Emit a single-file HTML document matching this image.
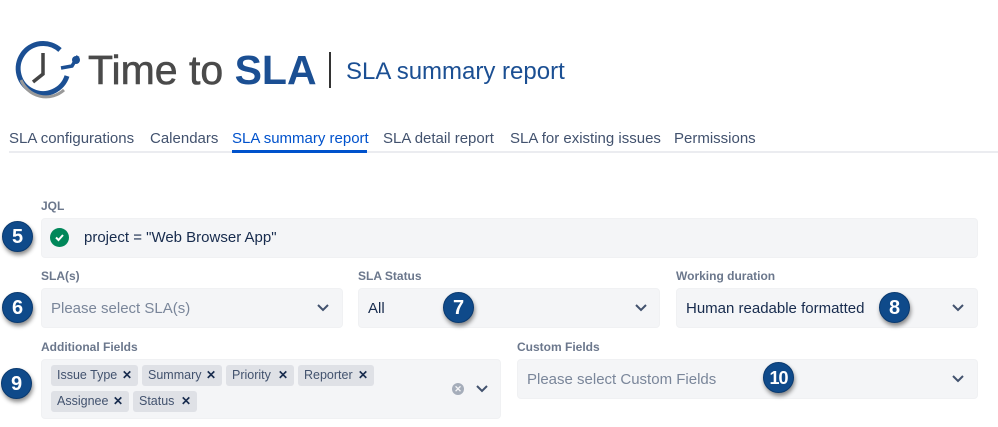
<!DOCTYPE html>
<html><head><meta charset="utf-8"><style>
*{margin:0;padding:0;box-sizing:border-box}
body{width:998px;height:427px;background:#fff;position:relative;overflow:hidden;font-family:"Liberation Sans",Arial,sans-serif;color:#172b4d}
.a{position:absolute;white-space:nowrap}
.tab{position:absolute;top:130px;font-size:15px;color:#42526e}
.lbl{position:absolute;font-size:12px;font-weight:bold;color:#6b778c}
.box{position:absolute;background:#f4f5f7;border-radius:4px;border:1px solid #f0f1f3}
.ph{position:absolute;font-size:15px}
.chev{position:absolute;width:16px;height:10px}
.badge{position:absolute;width:31px;height:31px;border-radius:50%;background:#0f4a8a;color:#fff;font-weight:bold;font-size:20px;text-align:center;line-height:31px;box-shadow:1px 3px 4px rgba(0,0,0,.45);border:1px solid #0a3a70}
.tag{position:absolute;height:21px;background:#dfe1e6;border-radius:3px;font-size:12.5px;color:#42526e;line-height:21px;padding-left:6px}
.tag b{position:absolute;right:6px;top:0;font-size:12px;color:#172b4d}
</style></head><body>
<svg class="a" style="left:14px;top:40px" width="70" height="60" viewBox="0 0 70 60">
<path d="M46 10 A25 25 0 1 0 53 36" fill="none" stroke="#1b4f93" stroke-width="5"/>
<path d="M7 40 A27 27 0 0 0 50 50" fill="none" stroke="#999" stroke-width="3"/>
<path d="M29 13 V34 L19 42" fill="none" stroke="#444" stroke-width="3.5"/>
<circle cx="62" cy="20" r="4" fill="#1b4f93"/>
<path d="M47 28 L58 26 L64 16" fill="none" stroke="#1b4f93" stroke-width="3.5"/>
</svg>
<div class="a" style="left:88px;top:47px;font-size:41px;color:#4a4a4a;-webkit-text-stroke:0.6px #4a4a4a">Time to <span style="color:#1b4f93;font-weight:bold;-webkit-text-stroke:0">SLA</span></div>
<div class="a" style="left:329px;top:52px;width:2px;height:36px;background:#333"></div>
<div class="a" style="left:346px;top:58px;font-size:24px;color:#1b4f93">SLA summary report</div>
<div class="tab" style="left:9px">SLA configurations</div>
<div class="tab" style="left:150px">Calendars</div>
<div class="tab" style="left:232px;color:#0052cc">SLA summary report</div>
<div class="tab" style="left:383px">SLA detail report</div>
<div class="tab" style="left:510px">SLA for existing issues</div>
<div class="tab" style="left:674px">Permissions</div>
<div class="a" style="left:9px;top:151px;width:989px;height:2px;background:#ebecf0"></div>
<div class="a" style="left:232px;top:150px;width:135px;height:3px;background:#0052cc"></div>

<div class="lbl" style="left:41px;top:199px">JQL</div>
<div class="box" style="left:41px;top:218px;width:937px;height:40px"></div>
<div class="a" style="left:50px;top:228px;width:19px;height:19px;border-radius:50%;background:#00875a"></div>
<svg class="a" style="left:54px;top:233px" width="11" height="9"><path d="M2 4.5 L4.5 7 L9 2" fill="none" stroke="#fff" stroke-width="2"/></svg>
<div class="ph" style="left:84px;top:229px">project = "Web Browser App"</div>

<div class="lbl" style="left:41px;top:269px">SLA(s)</div>
<div class="lbl" style="left:358px;top:269px">SLA Status</div>
<div class="lbl" style="left:676px;top:269px">Working duration</div>
<div class="box" style="left:41px;top:288px;width:302px;height:40px"></div>
<div class="box" style="left:358px;top:288px;width:302px;height:40px"></div>
<div class="box" style="left:676px;top:288px;width:302px;height:40px"></div>
<div class="ph" style="left:51px;top:300px;color:#7a869a">Please select SLA(s)</div>
<div class="ph" style="left:368px;top:300px">All</div>
<div class="ph" style="left:686px;top:300px">Human readable formatted</div>

<div class="lbl" style="left:41px;top:340px">Additional Fields</div>
<div class="lbl" style="left:517px;top:340px">Custom Fields</div>
<div class="box" style="left:41px;top:359px;width:460px;height:60px"></div>
<div class="box" style="left:517px;top:359px;width:461px;height:40px"></div>
<div class="ph" style="left:527px;top:371px;color:#7a869a">Please select Custom Fields</div>

<div class="tag" style="left:51px;top:365px;width:87px">Issue Type<b>✕</b></div>
<div class="tag" style="left:142px;top:365px;width:80px">Summary<b>✕</b></div>
<div class="tag" style="left:226px;top:365px;width:68px">Priority<b>✕</b></div>
<div class="tag" style="left:298px;top:365px;width:76px">Reporter<b>✕</b></div>
<div class="tag" style="left:51px;top:391px;width:78px">Assignee<b>✕</b></div>
<div class="tag" style="left:133px;top:391px;width:64px">Status<b>✕</b></div>
<div class="a" style="left:452px;top:383px;width:12px;height:12px;border-radius:50%;background:#a5adba;color:#f4f5f7;font-size:9px;text-align:center;line-height:12px;font-weight:bold">✕</div>

<svg class="chev" style="left:315px;top:303px" viewBox="0 0 16 10"><path d="M3 2 L8 7 L13 2" fill="none" stroke="#42526e" stroke-width="2"/></svg>
<svg class="chev" style="left:633px;top:303px" viewBox="0 0 16 10"><path d="M3 2 L8 7 L13 2" fill="none" stroke="#42526e" stroke-width="2"/></svg>
<svg class="chev" style="left:950px;top:303px" viewBox="0 0 16 10"><path d="M3 2 L8 7 L13 2" fill="none" stroke="#42526e" stroke-width="2"/></svg>
<svg class="chev" style="left:474px;top:384px" viewBox="0 0 16 10"><path d="M3 2 L8 7 L13 2" fill="none" stroke="#42526e" stroke-width="2"/></svg>
<svg class="chev" style="left:950px;top:374px" viewBox="0 0 16 10"><path d="M3 2 L8 7 L13 2" fill="none" stroke="#42526e" stroke-width="2"/></svg>

<div class="badge" style="left:2px;top:221px">5</div>
<div class="badge" style="left:2px;top:292px">6</div>
<div class="badge" style="left:443px;top:292px">7</div>
<div class="badge" style="left:879px;top:292px">8</div>
<div class="badge" style="left:1px;top:368px">9</div>
<div class="badge" style="left:763px;top:362px;font-size:18px;letter-spacing:-1px">10</div>
</body></html>
